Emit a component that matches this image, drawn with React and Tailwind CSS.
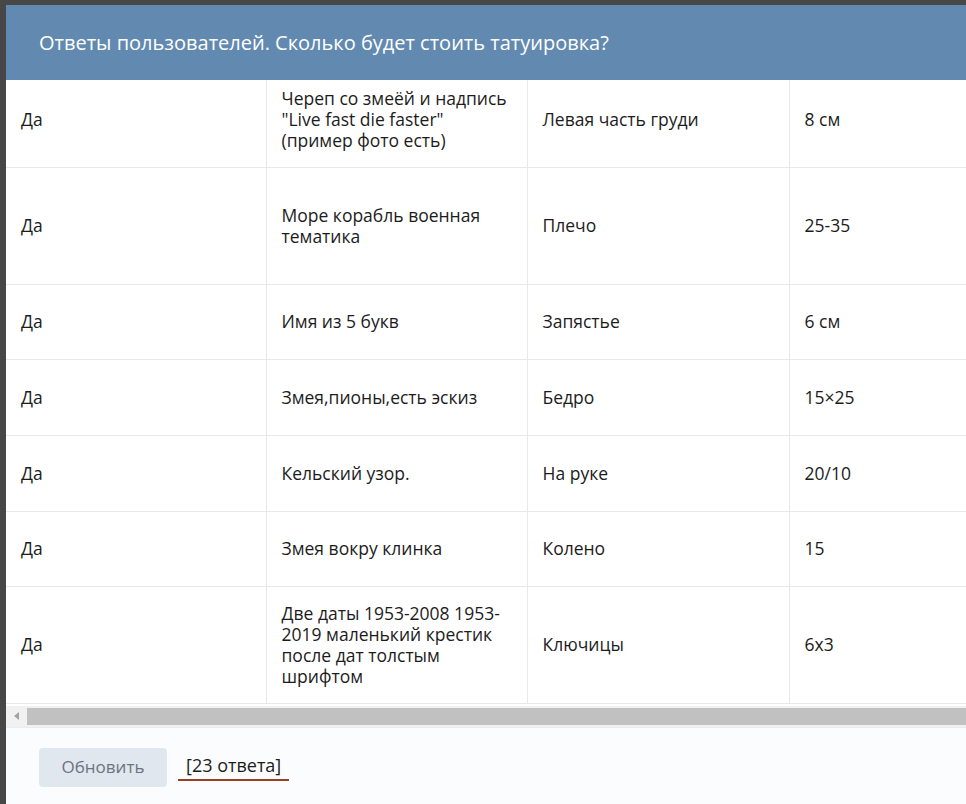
import React from 'react';

const rows = [
  { h: 'h-[87px]', pad: 'pb-[8px]', cells: ['Да', 'Череп со змеёй и надпись "Live fast die faster" (пример фото есть)', 'Левая часть груди', '8 см'] },
  { h: 'h-[117px]', pad: '', cells: ['Да', 'Море корабль военная тематика', 'Плечо', '25-35'] },
  { h: 'h-[75px]', pad: '', cells: ['Да', 'Имя из 5 букв', 'Запястье', '6 см'] },
  { h: 'h-[76px]', pad: '', cells: ['Да', 'Змея,пионы,есть эскиз', 'Бедро', '15×25'] },
  { h: 'h-[76px]', pad: '', cells: ['Да', 'Кельский узор.', 'На руке', '20/10'] },
  { h: 'h-[75px]', pad: '', cells: ['Да', 'Змея вокру клинка', 'Колено', '15'] },
  { h: 'h-[117px]', pad: '', cells: ['Да', 'Две даты 1953-2008 1953-2019 маленький крестик после дат толстым шрифтом', 'Ключицы', '6х3'] },
];

export default function App() {
  return (
    <div className="h-screen w-screen overflow-hidden bg-[#474747] pt-[5px] pl-[6px] font-['Open_Sans',sans-serif]">
      <div className="w-[1200px] bg-white flex flex-col">
        {/* header */}
        <div className="h-[75px] bg-[#6289b0] flex items-center pl-[33px]">
          <h1 className="text-[20px] text-white">Ответы пользователей. Сколько будет стоить татуировка?</h1>
        </div>

        {/* table */}
        <table className="border-collapse table-fixed w-[1200px] text-[17.5px] leading-[21px] text-[#1c1c1c]">
          <colgroup>
            <col className="w-[260px]" />
            <col className="w-[261px]" />
            <col className="w-[262px]" />
            <col className="w-[417px]" />
          </colgroup>
          <tbody>
            {rows.map((r, i) => (
              <tr key={i} className={`${r.h} border-b border-[#e8e8e8]`}>
                {r.cells.map((c, j) => (
                  <td key={j} className={`px-[15px] align-middle ${r.pad} ${j > 0 ? 'border-l border-[#e8e8e8]' : ''}`}>
                    <div className={j === 1 ? 'w-[230px]' : ''}>{c}</div>
                  </td>
                ))}
              </tr>
            ))}
          </tbody>
        </table>

        {/* scrollbar */}
        <div className="mt-[2px] h-[21px] bg-[#f1f1f1] flex items-center">
          <div className="w-[21px] flex items-center justify-center">
            <svg width="6" height="8" viewBox="0 0 6 8"><path d="M5 0 L0 4 L5 8 Z" fill="#a3a3a3" /></svg>
          </div>
          <div className="flex-1 h-[17px] bg-[#c1c1c1]" />
        </div>

        {/* footer */}
        <div className="h-[78px] bg-[#fbfcfe] border-t border-[#ececec] flex items-start pt-[20px] pl-[33px] gap-[11px]">
          <button className="h-[39px] w-[128px] rounded-[4px] bg-[#e1e7ef] text-[#6b7480] text-[17px]">Обновить</button>
          <span className="mt-[5px] px-[8px] pb-[2px] border-b-2 border-[#9b3f22] text-[18px] text-[#1c1c1c] leading-[24px]">[23 ответа]</span>
        </div>
      </div>
    </div>
  );
}
